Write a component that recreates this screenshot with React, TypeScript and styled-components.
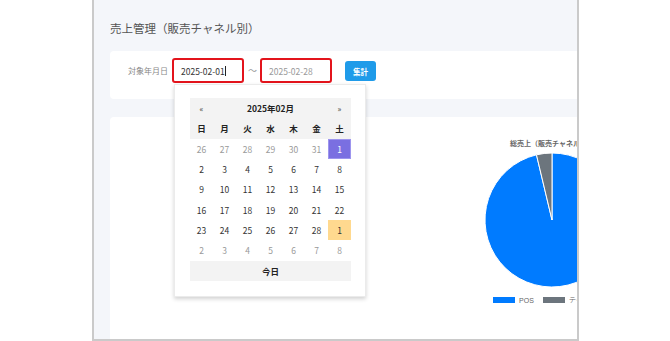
import React from 'react';
import styled, { createGlobalStyle } from 'styled-components';

const GlobalStyle = createGlobalStyle`
  html, body { margin: 0; padding: 0; background: #fff; }
  body { font-family: "Noto Sans CJK JP", "Noto Sans", sans-serif; }
`;

const Frame = styled.div`
  margin-left: 92px;
  width: 487px;
  height: 341px;
  box-sizing: border-box;
  border: 2px solid #cacaca;
  border-top: none;
  background: #f4f6fa;
  overflow: hidden;
  padding-left: 16px;
`;

const Content = styled.div`
  width: 884px;
  display: flex;
  flex-direction: column;
`;

const Title = styled.h1`
  margin: 0;
  height: 51px;
  box-sizing: border-box;
  padding-top: 5px;
  display: flex;
  align-items: center;
  font-size: 11.5px;
  font-weight: 400;
  color: #555;
`;

const FilterCard = styled.div`
  height: 48px;
  box-sizing: border-box;
  background: #fff;
  border-radius: 4px;
  padding: 7px 18px 0;
  display: flex;
  align-items: flex-start;
`;

const Label = styled.span`
  font-size: 8px;
  color: #888;
  margin-right: 4px;
  line-height: 25px;
`;

const Field = styled.div`
  position: relative;
`;

const Input = styled.div<{ $placeholder?: boolean }>`
  width: 72px;
  height: 25px;
  box-sizing: border-box;
  border: 2px solid #e3141c;
  border-radius: 3px;
  background: #fff;
  padding-left: 7px;
  display: flex;
  align-items: center;
  font-size: 8.5px;
  color: ${p => (p.$placeholder ? '#999' : '#333')};
`;

const Caret = styled.span`
  display: inline-block;
  width: 1px;
  height: 10px;
  background: #222;
  margin-left: 0.5px;
`;

const Tilde = styled.span`
  font-size: 9px;
  color: #999;
  margin: 0 3px 0 4px;
  line-height: 25px;
`;

const Button = styled.button`
  margin: 3px 0 0 13px;
  width: 31px;
  height: 20px;
  border: none;
  border-radius: 3px;
  background: #1f9be9;
  color: #fff;
  font-family: inherit;
  font-size: 7.5px;
  font-weight: 700;
  padding: 0;
`;

const Dropdown = styled.div`
  position: absolute;
  top: 26px;
  left: 2px;
  width: 192px;
  box-sizing: border-box;
  padding: 13px 14px 15px 15px;
  background: #fff;
  border: 1px solid rgba(0, 0, 0, 0.08);
  box-shadow: 0 2px 4px rgba(0, 0, 0, 0.18);
  z-index: 10;
`;

const Head = styled.div`
  background: #f3f3f3;
  display: grid;
  grid-template-columns: repeat(7, 1fr);
  grid-auto-rows: 20.33px;
`;

const HeadCell = styled.div<{ $span?: number }>`
  grid-column: span ${p => p.$span ?? 1};
  display: flex;
  align-items: center;
  justify-content: center;
  font-size: 8.5px;
  font-weight: 700;
  color: #222;
`;

const Nav = styled(HeadCell)`
  font-weight: 400;
  font-size: 8px;
  color: #333;
`;

const Days = styled.div`
  display: grid;
  grid-template-columns: repeat(7, 1fr);
  grid-auto-rows: 20.33px;
`;

const Day = styled.div<{ $muted?: boolean; $kind?: 'selected' | 'today' }>`
  display: flex;
  align-items: center;
  justify-content: center;
  font-size: 8.5px;
  color: ${p => (p.$kind === 'selected' ? '#fff' : p.$muted ? '#999' : '#333')};
  background: ${p =>
    p.$kind === 'selected' ? '#7a6fe1' : p.$kind === 'today' ? '#ffd98f' : 'transparent'};
  box-shadow: ${p => (p.$kind === 'selected' ? 'inset 0 0 0 1px #9d95ee' : 'none')};
`;

const TodayBar = styled.div`
  height: 20.33px;
  background: #f3f3f3;
  display: flex;
  align-items: center;
  justify-content: center;
  font-size: 8.5px;
  font-weight: 700;
  color: #222;
`;

const ChartCard = styled.div`
  margin-top: 18px;
  height: 260px;
  background: #fff;
  border-radius: 4px;
  padding-top: 21px;
  box-sizing: border-box;
  display: flex;
  justify-content: center;
`;

const ChartBlock = styled.div`
  display: flex;
  flex-direction: column;
  align-items: center;
`;

const ChartTitle = styled.div`
  font-size: 7px;
  line-height: 10px;
  font-weight: 700;
  color: #666;
  white-space: nowrap;
`;

const Pie = styled.svg`
  margin-top: 5px;
  display: block;
`;

const Legend = styled.div`
  margin-top: 8px;
  display: flex;
  align-items: center;
  gap: 9px;
`;

const LegendItem = styled.div`
  display: flex;
  align-items: center;
  gap: 4px;
  font-family: "Liberation Sans", Arial, sans-serif;
  font-size: 7px;
  color: #666;
  white-space: nowrap;
`;

const Swatch = styled.span<{ $color: string }>`
  width: 22px;
  height: 6px;
  background: ${p => p.$color};
`;

const weekdays = ['日', '月', '火', '水', '木', '金', '土'];

type Cell = { d: number; muted?: boolean; kind?: 'selected' | 'today' };

const cells: Cell[] = [
  { d: 26, muted: true }, { d: 27, muted: true }, { d: 28, muted: true }, { d: 29, muted: true },
  { d: 30, muted: true }, { d: 31, muted: true }, { d: 1, kind: 'selected' },
  ...Array.from({ length: 27 }, (_, i) => ({ d: i + 2 })),
  { d: 1, kind: 'today' },
  ...Array.from({ length: 7 }, (_, i) => ({ d: i + 2, muted: true })),
];

const R = 67;
const ang = (13.4 * Math.PI) / 180;
const gx = R - R * Math.sin(ang);
const gy = R - R * Math.cos(ang);

export default function App() {
  return (
    <>
      <GlobalStyle />
      <Frame>
        <Content>
          <Title>売上管理（販売チャネル別）</Title>
          <FilterCard>
            <Label>対象年月日</Label>
            <Field>
              <Input>
                2025-02-01
                <Caret />
              </Input>
              <Dropdown>
                <Head>
                  <Nav>«</Nav>
                  <HeadCell $span={5}>2025年02月</HeadCell>
                  <Nav>»</Nav>
                  {weekdays.map(w => (
                    <HeadCell key={w}>{w}</HeadCell>
                  ))}
                </Head>
                <Days>
                  {cells.map((c, i) => (
                    <Day key={i} $muted={c.muted} $kind={c.kind}>
                      {c.d}
                    </Day>
                  ))}
                </Days>
                <TodayBar>今日</TodayBar>
              </Dropdown>
            </Field>
            <Tilde>～</Tilde>
            <Field>
              <Input $placeholder>2025-02-28</Input>
            </Field>
            <Button>集計</Button>
          </FilterCard>
          <ChartCard>
            <ChartBlock>
              <ChartTitle>総売上（販売チャネル別）</ChartTitle>
              <Pie width={R * 2} height={R * 2} viewBox={`0 0 ${R * 2} ${R * 2}`}>
                <path
                  d={`M${R},${R} L${R},0 A${R},${R} 0 1 1 ${gx},${gy} Z`}
                  fill="#007bff"
                  stroke="#fff"
                  strokeWidth={1}
                />
                <path
                  d={`M${R},${R} L${gx},${gy} A${R},${R} 0 0 1 ${R},0 Z`}
                  fill="#6c757d"
                  stroke="#fff"
                  strokeWidth={1}
                />
              </Pie>
              <Legend>
                <LegendItem>
                  <Swatch $color="#007bff" />
                  POS
                </LegendItem>
                <LegendItem>
                  <Swatch $color="#6c757d" />
                  テイクアウト
                </LegendItem>
              </Legend>
            </ChartBlock>
          </ChartCard>
        </Content>
      </Frame>
    </>
  );
}
